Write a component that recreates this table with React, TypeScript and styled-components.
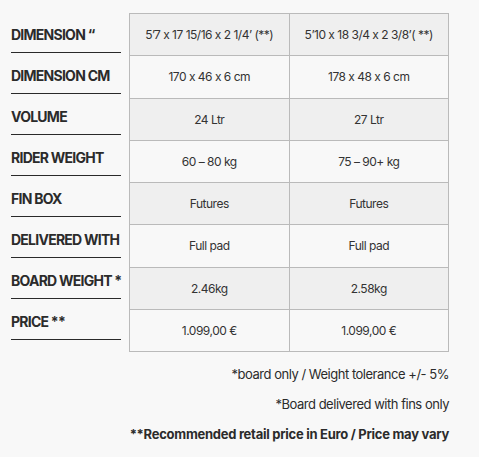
import React from "react";
import styled, { createGlobalStyle } from "styled-components";

const Global = createGlobalStyle`
  html, body { margin: 0; padding: 0; background: #f8f8f8; }
  body { font-family: Inter, "Noto Sans", Arial, sans-serif; color: #333; }
`;

const Page = styled.div`
  width: 438px;
  padding: 13px 0 0 11px;
`;

const Specs = styled.div`
  display: grid;
  grid-template-columns: 110px 320px;
  column-gap: 8px;
  align-items: start;
`;

const Labels = styled.div`
  display: flex;
  flex-direction: column;
`;

const Label = styled.div`
  height: 40px;
  box-sizing: border-box;
  padding-top: 12px;
  border-bottom: 1px solid #2a2a2a;
  margin-bottom: 1px;
  font-size: 14px;
  line-height: 20px;
  font-weight: 700;
  letter-spacing: -0.75px;
  color: #2b2b2b;
  white-space: nowrap;
`;

const Table = styled.table`
  width: 320px;
  border-collapse: collapse;
  table-layout: fixed;
`;

const Row = styled.tr<{ $shaded: boolean }>`
  background: ${(p) => (p.$shaded ? "#efefef" : "#f8f8f8")};
`;

const Cell = styled.td`
  height: 41.25px;
  padding: 0;
  border: 1px solid #bababa;
  text-align: center;
  vertical-align: middle;
  font-size: 12px;
  letter-spacing: -0.5px;
  color: #333;
  white-space: nowrap;
`;

const Notes = styled.div`
  text-align: right;
  margin-top: 12px;
  display: flex;
  flex-direction: column;
  gap: 10px;
`;

const Note = styled.div<{ $bold?: boolean }>`
  font-size: 13px;
  line-height: 20px;
  letter-spacing: ${(p) => (p.$bold ? "-0.27px" : "-0.48px")};
  font-weight: ${(p) => (p.$bold ? 700 : 400)};
  color: #2b2b2b;
  white-space: nowrap;
`;

const rows: [string, string, string][] = [
  ["DIMENSION \u201C", "5\u20197 x 17 15/16 x 2 1/4\u2019 (**)", "5\u201910 x 18 3/4 x 2 3/8\u2019( **)"],
  ["DIMENSION CM", "170 x 46 x 6 cm", "178 x 48 x 6 cm"],
  ["VOLUME", "24 Ltr", "27 Ltr"],
  ["RIDER WEIGHT", "60 \u2013 80 kg", "75 \u2013 90+ kg"],
  ["FIN BOX", "Futures", "Futures"],
  ["DELIVERED WITH", "Full pad", "Full pad"],
  ["BOARD WEIGHT *", "2.46kg", "2.58kg"],
  ["PRICE **", "1.099,00 \u20AC", "1.099,00 \u20AC"],
];

export default function App() {
  return (
    <>
      <Global />
      <Page>
        <Specs>
          <Labels>
            {rows.map(([l]) => (
              <Label key={l}>{l}</Label>
            ))}
          </Labels>
          <Table>
            <tbody>
              {rows.map(([l, a, b], i) => (
                <Row key={l} $shaded={i % 2 === 0}>
                  <Cell>{a}</Cell>
                  <Cell>{b}</Cell>
                </Row>
              ))}
            </tbody>
          </Table>
        </Specs>
        <Notes>
          <Note>*board only / Weight tolerance +/- 5%</Note>
          <Note>*Board delivered with fins only</Note>
          <Note $bold>**Recommended retail price in Euro / Price may vary</Note>
        </Notes>
      </Page>
    </>
  );
}
